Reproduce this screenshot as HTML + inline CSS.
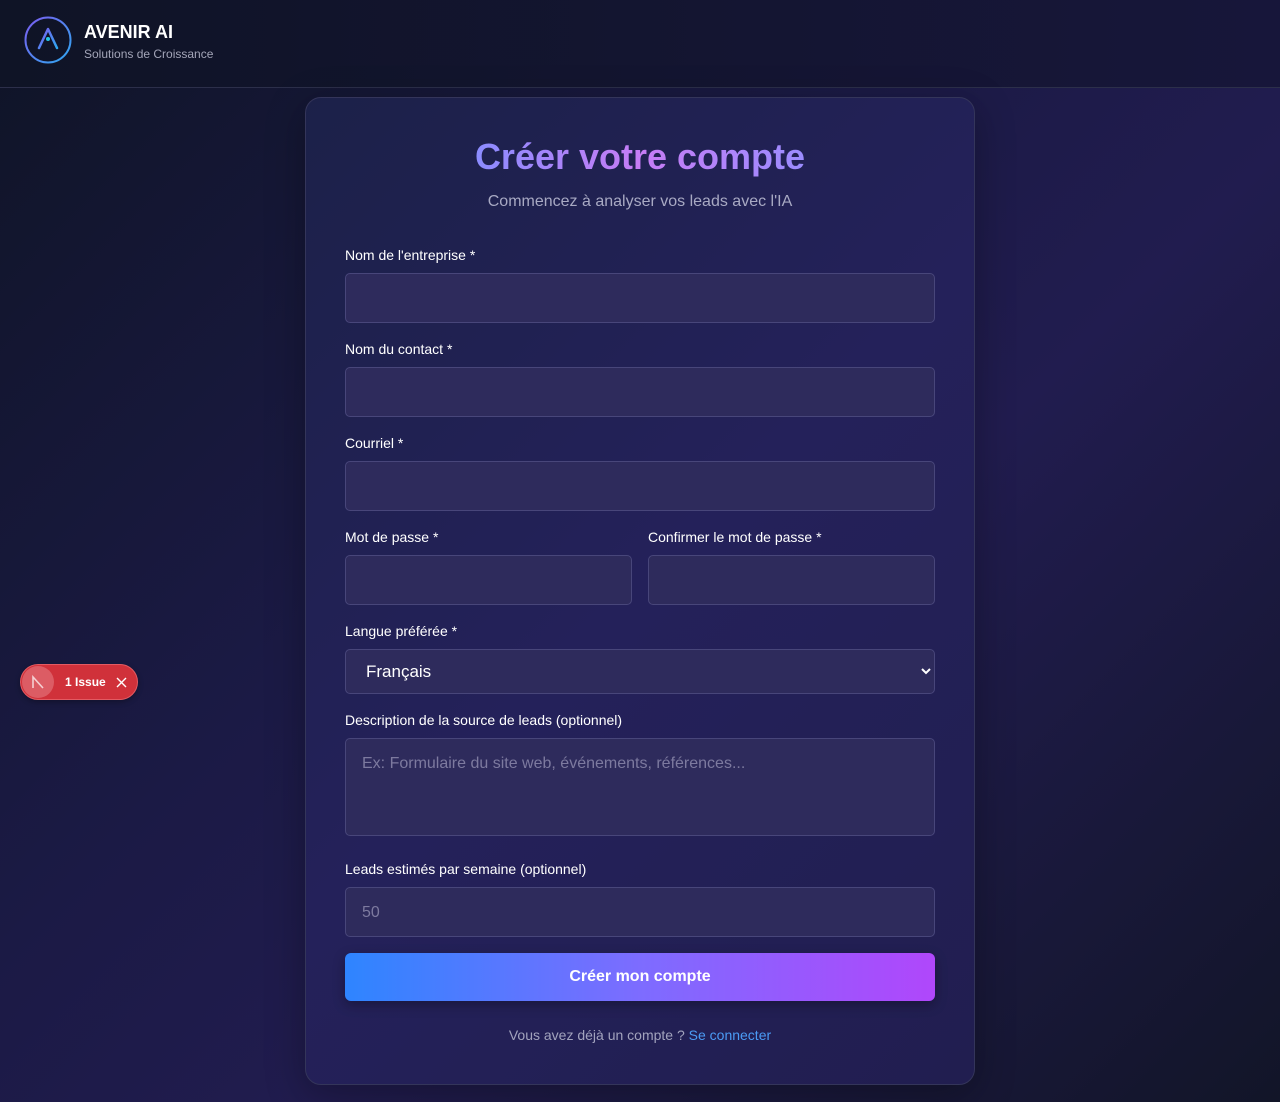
<!DOCTYPE html>
<html><head><meta charset="utf-8"><style>
*{box-sizing:border-box;margin:0;padding:0}
body{width:1280px;height:1102px;overflow:hidden;font-family:"Liberation Sans",sans-serif;background:linear-gradient(135deg,#0f1426 0%,#1b1a45 40%,#211c4f 60%,#121528 100%);position:relative;color:#fff}
.hdr{position:absolute;left:0;top:0;width:1280px;height:88px;background:linear-gradient(90deg,#0f1426,#141532 60%,#17163a);border-bottom:1px solid #2c2f4a}
.card{position:absolute;left:305px;top:97px;width:670px;height:988px;border:1px solid #34355a;border-radius:16px;background:linear-gradient(135deg,#1c2149 0%,#24215a 50%,#211e50 100%);box-shadow:0 10px 40px rgba(0,0,0,.3)}
.lbl{position:absolute;font-size:14px;color:#fff}
.in{position:absolute;background:#2e2b5c;border:1px solid #48467a;border-radius:5px}
.ph{position:absolute;font-size:16px;color:#7d7a9f}
</style></head><body>
<div class="hdr">
<svg style="position:absolute;left:24px;top:16px" width="48" height="48" viewBox="0 0 48 48"><defs><linearGradient id="g" x1="0" y1="0" x2="1" y2="1"><stop offset="0" stop-color="#7b5cf0"/><stop offset="1" stop-color="#2fa8f0"/></linearGradient></defs><circle cx="24" cy="24" r="22.5" fill="none" stroke="url(#g)" stroke-width="2"/><path d="M15 32 L24 13 L33 32" fill="none" stroke="url(#g)" stroke-width="2.5" stroke-linecap="round" stroke-linejoin="round"/><circle cx="24" cy="23" r="2" fill="#22c7e8"/></svg>
<div style="position:absolute;left:84px;top:22px;font-size:18px;font-weight:bold">AVENIR AI</div>
<div style="position:absolute;left:84px;top:47px;font-size:12px;color:#a3a5b8">Solutions de Croissance</div>
</div>
<div class="card"></div>
<div style="position:absolute;left:305px;width:670px;top:136px;text-align:center;font-size:36px;font-weight:bold;"><span style="background:linear-gradient(90deg,#8b8cff,#c67cf5 50%,#9b8cff);-webkit-background-clip:text;background-clip:text;color:transparent">Créer votre compte</span></div>
<div style="position:absolute;left:305px;width:670px;top:193px;text-align:center;font-size:16px;color:#a8a9c3">Commencez à analyser vos leads avec l'IA</div>
<div class="lbl" style="left:345px;top:247px">Nom de l'entreprise *</div>
<div class="in" style="left:345px;top:273px;width:590px;height:50px"></div>
<div class="lbl" style="left:345px;top:341px">Nom du contact *</div>
<div class="in" style="left:345px;top:367px;width:590px;height:50px"></div>
<div class="lbl" style="left:345px;top:435px">Courriel *</div>
<div class="in" style="left:345px;top:461px;width:590px;height:50px"></div>
<div class="lbl" style="left:345px;top:529px">Mot de passe *</div>
<div class="in" style="left:345px;top:555px;width:287px;height:50px"></div>
<div class="lbl" style="left:648px;top:529px">Confirmer le mot de passe *</div>
<div class="in" style="left:648px;top:555px;width:287px;height:50px"></div>
<div class="lbl" style="left:345px;top:623px">Langue préférée *</div>
<div class="in" style="left:345px;top:649px;width:590px;height:45px"></div>
<div style="position:absolute;left:366px;top:662px;font-size:17px;color:#fff">Français</div>
<svg style="position:absolute;left:920px;top:666px" width="12" height="10" viewBox="0 0 12 10"><path d="M2 3 L6 7 L10 3" fill="none" stroke="#fff" stroke-width="2"/></svg>
<div class="lbl" style="left:345px;top:712px">Description de la source de leads (optionnel)</div>
<div class="in" style="left:345px;top:738px;width:590px;height:98px"></div>
<div class="ph" style="left:362px;top:755px">Ex: Formulaire du site web, événements, références...</div>
<div class="lbl" style="left:345px;top:861px">Leads estimés par semaine (optionnel)</div>
<div class="in" style="left:345px;top:887px;width:590px;height:50px"></div>
<div class="ph" style="left:362px;top:904px">50</div>
<div style="position:absolute;left:345px;top:953px;width:590px;height:48px;border-radius:6px;background:linear-gradient(90deg,#2e85ff,#7d6cff 50%,#b047fb);text-align:center;line-height:47px;font-size:16px;font-weight:bold;box-shadow:0 4px 12px rgba(0,0,0,.3)">Créer mon compte</div>
<div style="position:absolute;left:305px;width:670px;top:1027px;text-align:center;font-size:14px;color:#a2a3bd">Vous avez déjà un compte ? <span style="color:#4b9bf5">Se connecter</span></div>
<div style="position:absolute;left:20px;top:664px;width:118px;height:36px;border-radius:18px;background:#d0313a;border:1px solid #e35b62;box-shadow:0 2px 6px rgba(0,0,0,.3)">
<div style="position:absolute;left:1px;top:1px;width:32px;height:32px;border-radius:16px;background:#dc5c64"></div>
<svg style="position:absolute;left:10px;top:10px" width="14" height="14" viewBox="0 0 14 14"><path d="M2 13 V2 L12 13" fill="none" stroke="#f4d0d2" stroke-width="1.6"/></svg>
<div style="position:absolute;left:44px;top:10px;font-size:12px;font-weight:bold">1 Issue</div>
<svg style="position:absolute;left:95px;top:12px" width="11" height="11" viewBox="0 0 11 11"><path d="M1 1 L10 10 M10 1 L1 10" stroke="#fff" stroke-width="1.4"/></svg>
</div>
</body></html>
